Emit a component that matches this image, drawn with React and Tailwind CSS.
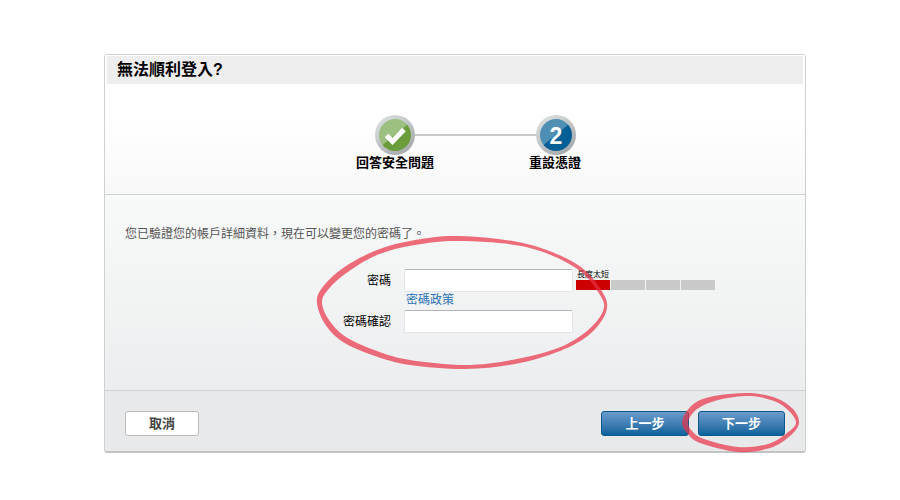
const FONT = "font-['Liberation_Sans','Noto_Sans_CJK_TC',sans-serif]";

function loop(pts) {
  const n = pts.length;
  let d = `M${pts[0][0]} ${pts[0][1]}`;
  for (let i = 0; i < n; i++) {
    const p0 = pts[(i - 1 + n) % n];
    const p1 = pts[i];
    const p2 = pts[(i + 1) % n];
    const p3 = pts[(i + 2) % n];
    const c1x = p1[0] + (p2[0] - p0[0]) / 6;
    const c1y = p1[1] + (p2[1] - p0[1]) / 6;
    const c2x = p2[0] - (p3[0] - p1[0]) / 6;
    const c2y = p2[1] - (p3[1] - p1[1]) / 6;
    d += ` C${c1x} ${c1y} ${c2x} ${c2y} ${p2[0]} ${p2[1]}`;
  }
  return d + "Z";
}

const bigOuter = [[460,236],[415,240],[377,250],[343,268],[322,288],[317,303],[325,324],[343,342],[375,356],[410,365],[465,369],[515,364],[560,351],[590,334],[606,312],[603,293],[578,265],[527,244]];
const bigInner = [[460,241],[415,245],[377,255],[345,274],[327,291],[322,303],[329,320],[346,337],[377,351],[410,360],[465,365],[512,360],[558,348],[587,331],[603,311],[600,295],[576,268],[526,247]];
const btnOuter = [[750,393],[720,395],[698,401],[686,412],[682,423],[687,433],[700,443],[738,452],[770,448],[790,436],[799,423],[793,409],[776,398]];
const btnInner = [[750,396],[722,399],[702,406],[692,414],[688,423],[692,431],[704,439],[738,447],[768,444],[787,433],[796,423],[789,411],[774,401]];

function Badge({ id, inner1, inner2, children }) {
  return (
    <svg width="40" height="40" viewBox="0 0 40 40" className="block shrink-0">
      <defs>
        <linearGradient id={`${id}r`} x1="0.1" y1="0" x2="0.8" y2="1">
          <stop offset="0" stopColor="#dfe2e2" />
          <stop offset="1" stopColor="#a3a7a9" />
        </linearGradient>
        <linearGradient id={`${id}i`} x1="0.1" y1="0.05" x2="0.8" y2="0.9">
          <stop offset="0" stopColor={inner1} />
          <stop offset="0.52" stopColor={inner1} />
          <stop offset="0.56" stopColor={inner2} />
          <stop offset="1" stopColor={inner2} />
        </linearGradient>
      </defs>
      <circle cx="20" cy="20" r="20" fill={`url(#${id}r)`} />
      <circle cx="20" cy="20" r="16" fill={`url(#${id}i)`} />
      {children}
    </svg>
  );
}

function Field({ label }) {
  return (
    <div className="flex items-center h-[23px]">
      <label className="w-[299px] pr-[13px] text-right text-[12px] text-black">{label}</label>
      <input className="w-[169px] h-[23px] bg-white border border-[#e3e5ea] border-t-[#b3b3ba] rounded-[2px] outline-none" />
    </div>
  );
}

function Button({ children, className }) {
  return (
    <button className={`h-[25px] rounded-[3px] text-[13px] font-bold ${className}`}>{children}</button>
  );
}

export default function App() {
  return (
    <div className={`relative w-[900px] h-[500px] bg-white pt-[54px] pl-[104px] overflow-hidden ${FONT}`}>
      <div className="w-[702px] h-[399px] flex flex-col bg-white border border-[#cfd1d1] border-b-2 border-b-[#c2c4c4] rounded-[3px]">
        <div className="h-[140px] border-b border-[#cfd1d1] bg-linear-to-b from-white from-[45%] to-[#f8f8f8] px-[2px] pt-[1px]">
          <div className="h-[28px] bg-[#eeeeee] flex items-center pl-[10px] text-[16px] leading-none font-bold text-black">
            無法順利登入?
          </div>
          <div className="flex items-center ml-[268px] mt-[31px]">
            <Badge id="a" inner1="#9cc07f" inner2="#6a9c3c">
              <path d="M11.5 20.5 L17.5 26.5 L29 14.5" fill="none" stroke="#fff" strokeWidth="5" />
            </Badge>
            <div className="w-[121px] h-[2px] bg-[#c9c9c9]" />
            <Badge id="b" inner1="#4f8fb4" inner2="#055f95">
              <text x="20" y="28.5" textAnchor="middle" fontSize="23" fontWeight="700" fill="#fff" fontFamily="Liberation Sans, sans-serif">2</text>
            </Badge>
          </div>
          <div className="flex ml-[228px] -mt-px text-[13px] leading-[18px] font-bold text-black">
            <div className="w-[120px] text-center">回答安全問題</div>
            <div className="ml-[40px] w-[120px] text-center">重設憑證</div>
          </div>
        </div>

        <div className="h-[196px] border-b border-[#cfd1d1] bg-linear-to-b from-[#f8f9f9] to-[#ecedee] pt-[31px]">
          <p className="pl-[20px] text-[12px] leading-[16px] text-[#555]">
            您已驗證您的帳戶詳細資料{"\uFF0C"}現在可以變更您的密碼了。
          </p>
          <div className="mt-[27px] flex flex-col">
            <div className="flex items-start">
              <Field label="密碼" />
              <div className="ml-[3px] w-[140px]">
                <div className="text-[8px] leading-[9px] h-[11px] text-black whitespace-nowrap pl-[1px] pt-[1px]">長度太短</div>
                <div className="flex gap-px h-[10px]">
                  <div className="w-[34px] bg-[#cc0000]" />
                  <div className="w-[34px] bg-[#c9c9c9]" />
                  <div className="w-[34px] bg-[#c9c9c9]" />
                  <div className="w-[34px] bg-[#c9c9c9]" />
                </div>
              </div>
            </div>
            <a className="ml-[301px] h-[18px] text-[12px] leading-[16px] text-[#2a74b5]">密碼政策</a>
            <Field label="密碼確認" />
          </div>
        </div>

        <div className="flex-1 bg-[#e8e9ea] flex justify-between items-start pt-[20px] pl-[20px] pr-[19px]">
          <Button className="w-[74px] bg-white border border-[#bcbcbc] text-[#444]">取消</Button>
          <div className="flex gap-[9px] pr-px">
            <Button className="w-[88px] border border-[#0c5a8c] text-white bg-linear-to-b from-[#6a9bcc] to-[#05639c]">上一步</Button>
            <Button className="w-[87px] border border-[#0c5a8c] text-white bg-linear-to-b from-[#6a9bcc] to-[#05639c]">下一步</Button>
          </div>
        </div>
      </div>

      <svg width="900" height="500" className="absolute inset-0 pointer-events-none">
        <defs>
          <filter id="soft" x="-5%" y="-5%" width="110%" height="110%">
            <feGaussianBlur stdDeviation="0.5" />
          </filter>
        </defs>
        <g fill="#e93347" fillRule="evenodd" opacity="0.7" filter="url(#soft)">
          <path d={`${loop(bigOuter)} ${loop(bigInner)}`} />
          <path d={`${loop(btnOuter)} ${loop(btnInner)}`} />
        </g>
      </svg>
    </div>
  );
}
